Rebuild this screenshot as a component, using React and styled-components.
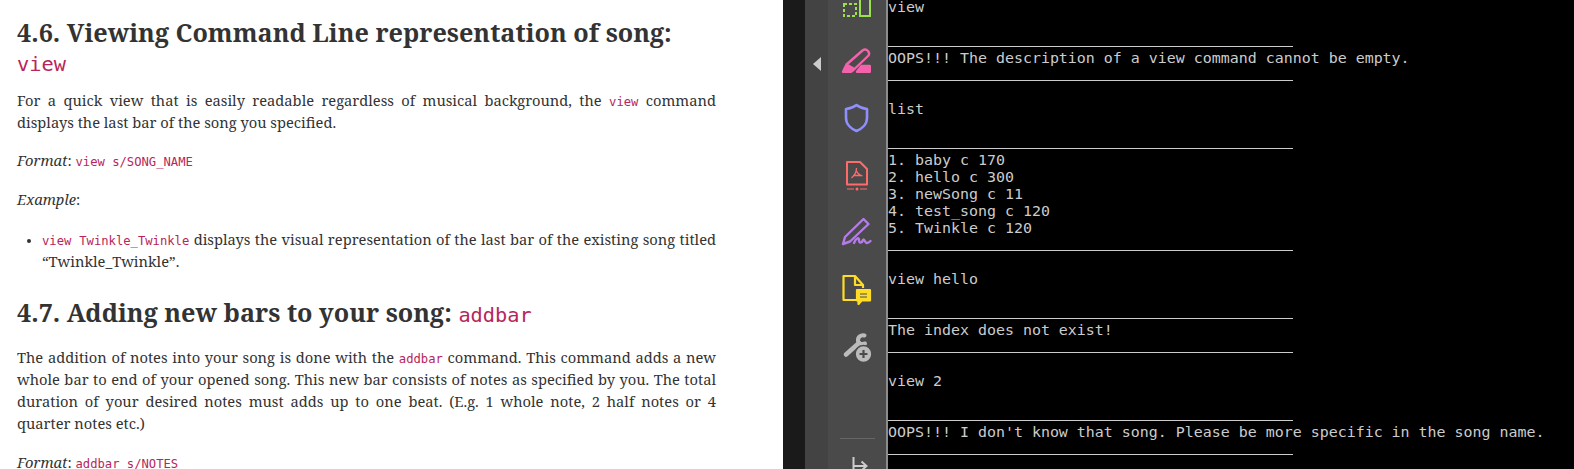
import React from 'react';
import styled, { createGlobalStyle } from 'styled-components';

const GlobalStyle = createGlobalStyle`
  html, body {
    margin: 0;
    padding: 0;
    height: 100%;
    overflow: hidden;
    background: #000;
  }
`;

const Screen = styled.div`
  display: grid;
  grid-template-columns: 783px 22px 23px 58px 2px 1fr;
  height: 469px;
  overflow: hidden;
`;

const Doc = styled.main`
  background: #fff;
  color: #333;
  padding: 17.5px 67px 0 17px;
  overflow: hidden;
  font-family: "Noto Serif", "DejaVu Serif Condensed", "DejaVu Serif", serif;
  font-size: 14.7px;
  line-height: 22px;
`;

const Heading = styled.h2`
  margin: ${(props) => props.$top || 0}px 0 ${(props) => props.$bottom || 13}px;
  font-size: 25.2px;
  line-height: 29px;
  font-weight: 700;
  color: #333;
`;

const HeadingCode = styled.code`
  font-family: "DejaVu Sans Mono", monospace;
  font-weight: 400;
  font-size: 20.3px;
  line-height: 1;
  color: #b8255a;
`;

const Para = styled.p`
  margin: 0 0 16.5px;
  text-align: justify;
`;

const Code = styled.code`
  font-family: "DejaVu Sans Mono", monospace;
  font-size: 12.2px;
  line-height: 1;
  color: #b8255a;
`;

const BulletList = styled.ul`
  margin: 18.5px 0 0;
  padding-left: 25px;
  text-align: justify;

  li::marker {
    font-size: 11px;
  }
`;

const Gutter = styled.div`
  background: #1a1a1a;
`;

const Rail = styled.div`
  background: #434343;
  display: flex;
  justify-content: center;
  padding-top: 57px;
`;

const Sidebar = styled.nav`
  background: #4a4a4a;
  display: flex;
  flex-direction: column;
  align-items: center;
  margin-top: -19px;
  height: 488px;
`;

const ToolSlot = styled.div`
  height: ${(props) => props.$h}px;
  flex: none;
  display: flex;
  align-items: center;
  justify-content: center;
`;

const SideDivider = styled.div`
  flex: none;
  width: 35px;
  height: 1px;
  margin-top: 61px;
  background: #666;
`;

const Edge = styled.div`
  background: #8c8c8c;
`;

const Terminal = styled.section`
  background: #000;
  color: #ccc;
  overflow: hidden;
  font-family: "DejaVu Sans Mono", monospace;
  font-size: 14.95px;
  line-height: 17px;
`;

const Log = styled.div`
  margin-top: -1px;
`;

const LogLine = styled.div`
  height: 17px;
  white-space: pre;
`;

const Rule = styled.div`
  height: 14px;
  margin-bottom: 3px;
  width: 405px;
  box-sizing: border-box;
  border-bottom: 1px solid #ccc;
`;

const GreenIcon = () => (
  <svg width="32" height="32" viewBox="0 0 32 32" fill="none" stroke="#9be04e" strokeWidth="2">
    <rect x="3" y="12" width="12" height="12" strokeDasharray="3 2" />
    <rect x="19" y="-2" width="10" height="26" />
  </svg>
);

const HighlightIcon = () => (
  <svg width="32" height="32" viewBox="0 0 32 32" fill="none" stroke="#f562ac" strokeWidth="2.4" strokeLinejoin="round">
    <path d="M21.5 5.5 Q24.5 3.5 27 6 Q29 8.5 27.5 10.5 L13.5 24 L5.5 19.5 Z" />
    <path d="M5 20.5 L12.5 25 L10 26.7 H2 Z" fill="#f562ac" />
    <path d="M16 26.7 L20.5 21 H28.8 V26.7 Z" fill="#f562ac" />
  </svg>
);

const ShieldIcon = () => (
  <svg width="32" height="32" viewBox="0 0 32 32" fill="none" stroke="#8f8fff" strokeWidth="2.6" strokeLinejoin="round">
    <path d="M15.5 4 C18 6 22 7.5 26 8 V17 C26 23.5 20.5 28 15.5 30 C10.5 28 5 23.5 5 17 V8 C9 7.5 13 6 15.5 4 Z" />
  </svg>
);

const PdfIcon = () => (
  <svg width="32" height="32" viewBox="0 0 32 32" fill="none" stroke="#ff6b6b" strokeWidth="2" strokeLinejoin="round">
    <path d="M6 3 H19 L26 10 V25.5 H6 Z" />
    <path d="M15.5 9 C15.5 13 14 16 10.5 19 M15.5 12 C16.5 14.5 18.5 16 21.5 17 M12 16.5 H20" strokeWidth="1.3" />
    <path d="M6 30 H13 M19 30 H26" strokeWidth="1.2" />
    <circle cx="16" cy="30" r="1.5" fill="#ff6b6b" stroke="none" />
  </svg>
);

const SignIcon = () => (
  <svg width="32" height="32" viewBox="0 0 32 32" fill="none" stroke="#b57be8" strokeWidth="2.4" strokeLinejoin="round" strokeLinecap="round">
    <path d="M22.5 3 L27.5 8 L9 25.5 L2 28 L4 21 Z" />
    <path d="M13 27 C15 22 18 21 18 24 C18 28 21 27 22 24 C23 22 24 27 26 27 C27.5 27 28.5 26 29.5 25" />
  </svg>
);

const CommentDocIcon = () => (
  <svg width="32" height="32" viewBox="0 0 32 32" fill="none" stroke="#ffdc28" strokeWidth="2.2" strokeLinejoin="round">
    <path d="M15 27 H2.5 V3 H14 L22 12 V15" />
    <path d="M14 3 V12 H22" />
    <path d="M16 17 H29 V27.5 H20.5 L17.5 31 V27.5 H16 Z" fill="#ffdc28" />
    <path d="M19 21 H26 M19 24 H26" stroke="#4a4a4a" strokeWidth="1.2" />
  </svg>
);

const WrenchPlusIcon = () => (
  <svg width="32" height="32" viewBox="0 0 32 32" fill="none" stroke="#bbb" strokeLinecap="round">
    <path d="M5 23.5 L18 12" strokeWidth="4.6" />
    <path d="M23.5 4.5 C20 3.5 16.5 6 17 10 C17.5 12.5 20.5 13.5 24 12.5" strokeWidth="4" />
    <circle cx="22.5" cy="23" r="8.4" fill="#bbb" stroke="#4a4a4a" strokeWidth="1.5" />
    <path d="M22.5 19 V27 M18.5 23 H26.5" stroke="#4a4a4a" strokeWidth="2.2" strokeLinecap="butt" />
  </svg>
);

const ExitIcon = () => (
  <svg width="32" height="32" viewBox="0 0 32 32" fill="none" stroke="#ccc" strokeWidth="2">
    <path d="M12.5 8 V26 M13 17 H25 M20.5 12.5 L25.5 17 L20.5 21.5" />
  </svg>
);

const CollapseArrow = () => (
  <svg width="8" height="14" viewBox="0 0 8 14">
    <path d="M8 0 V14 L0 7 Z" fill="#ccc" />
  </svg>
);

const tools = [
  { h: 54, icon: <GreenIcon /> },
  { h: 52, icon: <HighlightIcon /> },
  { h: 60, icon: <ShieldIcon /> },
  { h: 56, icon: <PdfIcon /> },
  { h: 58, icon: <SignIcon /> },
  { h: 56, icon: <CommentDocIcon /> },
  { h: 60, icon: <WrenchPlusIcon /> },
];

const logRows = [
  'view', '', null,
  'OOPS!!! The description of a view command cannot be empty.', null,
  '', 'list', '', null,
  '1. baby c 170', '2. hello c 300', '3. newSong c 11', '4. test_song c 120', '5. Twinkle c 120', null,
  '', 'view hello', '', null,
  'The index does not exist!', null,
  '', 'view 2', '', null,
  "OOPS!!! I don't know that song. Please be more specific in the song name.", null,
];

function App() {
  return (
    <Screen>
      <GlobalStyle />
      <Doc>
        <Heading>
          4.6. Viewing Command Line representation of song: <HeadingCode>view</HeadingCode>
        </Heading>
        <Para>
          For a quick view that is easily readable regardless of musical background, the <Code>view</Code> command displays the last bar of the song you specified.
        </Para>
        <Para>
          <em>Format</em>: <Code>view s/SONG_NAME</Code>
        </Para>
        <Para>
          <em>Example</em>:
        </Para>
        <BulletList>
          <li>
            <Code>view Twinkle_Twinkle</Code> displays the visual representation of the last bar of the existing song titled “Twinkle_Twinkle”.
          </li>
        </BulletList>
        <Heading $top={25.5} $bottom={19.5}>
          4.7. Adding new bars to your song: <HeadingCode>addbar</HeadingCode>
        </Heading>
        <Para>
          The addition of notes into your song is done with the <Code>addbar</Code> command. This command adds a new whole bar to end of your opened song. This new bar consists of notes as specified by you. The total duration of your desired notes must adds up to one beat. (E.g. 1 whole note, 2 half notes or 4 quarter notes etc.)
        </Para>
        <Para>
          <em>Format</em>: <Code>addbar s/NOTES</Code>
        </Para>
      </Doc>
      <Gutter />
      <Rail>
        <CollapseArrow />
      </Rail>
      <Sidebar>
        {tools.map((tool, index) => (
          <ToolSlot key={index} $h={tool.h}>{tool.icon}</ToolSlot>
        ))}
        <SideDivider />
        <ToolSlot $h={52}><ExitIcon /></ToolSlot>
      </Sidebar>
      <Edge />
      <Terminal>
        <Log>
          {logRows.map((row, index) => (
            row === null ? <Rule key={index} /> : <LogLine key={index}>{row}</LogLine>
          ))}
        </Log>
      </Terminal>
    </Screen>
  );
}

export default App;
